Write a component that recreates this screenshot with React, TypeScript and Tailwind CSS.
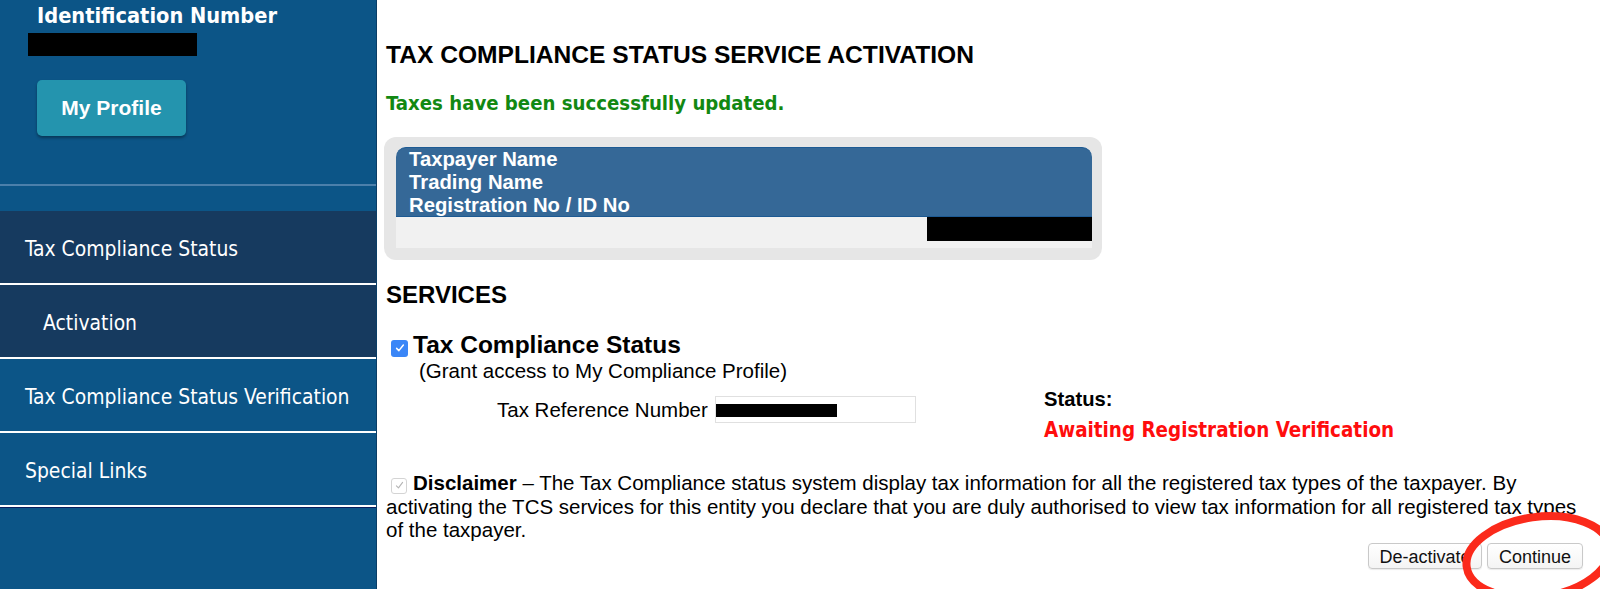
import React from 'react';

const tahoma = "font-[family-name:'DejaVu_Sans_Condensed','DejaVu_Sans',sans-serif] font-stretch-condensed";
const arial = "font-[family-name:'Liberation_Sans',Arial,sans-serif]";

const navItems = [
  { label: 'Tax Compliance Status', active: true, indent: false },
  { label: 'Activation', active: true, indent: true },
  { label: 'Tax Compliance Status Verification', active: false, indent: false },
  { label: 'Special Links', active: false, indent: false },
];

function Sidebar() {
  return (
    <aside className={`w-[377px] shrink-0 bg-[#0c5587] border-r border-[#0a3d66] flex flex-col text-white ${tahoma}`}>
      <div className="pl-[37px] pt-[4px] font-bold text-[21.6px] leading-[24px]">Identification Number</div>
      <div className="ml-[28px] mt-[5px] w-[169px] h-[23px] bg-black" />
      <div className="pl-[37px] mt-[24px]">
        <button className={`w-[149px] h-[56px] rounded-[5px] bg-[#2494ae] text-white font-bold text-[21px] shadow-[0_2px_3px_rgba(0,0,0,0.35)] ${arial}`}>
          My Profile
        </button>
      </div>
      <div className="mt-[48px] h-[2px] bg-[#4c80ab]" />
      <nav className="mt-[25px]">
        {navItems.map((item) => (
          <div
            key={item.label}
            className={`h-[74px] pt-[6px] flex items-center border-b-2 border-white shadow-[0_1px_0_#0a1e5e] text-[20.9px] ${
              item.active ? 'bg-[#163a5f]' : 'bg-[#0c5587]'
            } ${item.indent ? 'pl-[43px]' : 'pl-[25px]'}`}
          >
            {item.label}
          </div>
        ))}
      </nav>
    </aside>
  );
}

function CheckBox({ disabled }: { disabled?: boolean }) {
  if (disabled) {
    return (
      <span className="inline-flex w-4 h-4 items-center justify-center rounded-[3px] border border-[#d4d4d4] bg-white align-[-1px]">
        <svg viewBox="0 0 16 16" className="w-[11px] h-[11px]">
          <path d="M3.5 8.5 L6.5 11.5 L12.5 3.5" fill="none" stroke="#b5b5b5" strokeWidth="1.6" strokeLinecap="round" strokeLinejoin="round" />
        </svg>
      </span>
    );
  }
  return (
    <span className="inline-flex w-[17px] h-[17px] items-center justify-center rounded-[3px] bg-[#3a86f7] shrink-0">
      <svg viewBox="0 0 16 16" className="w-[12px] h-[12px]">
        <path d="M3.5 8.5 L6.5 11.5 L12.5 4" fill="none" stroke="white" strokeWidth="2" strokeLinecap="round" strokeLinejoin="round" />
      </svg>
    </span>
  );
}

export default function App() {
  return (
    <div className="relative flex h-[589px] w-[1600px] overflow-hidden bg-white">
      <Sidebar />

      <main className={`flex-1 pl-[9px] pr-[17px] text-black ${arial}`}>
        <h1 className="pt-[41px] text-[24.6px] leading-[28px] font-bold">TAX COMPLIANCE STATUS SERVICE ACTIVATION</h1>

        <p className={`mt-[23px] text-[20.2px] leading-[23px] font-bold text-[#128812] ${tahoma}`}>
          Taxes have been successfully updated.
        </p>

        {/* taxpayer card */}
        <div className="mt-[22px] -ml-[2px] w-[718px] rounded-[12px] bg-[#e6e6e6] pt-[10px] pb-[12px] pl-[12px] pr-[10px]">
          <div className="h-[70px] rounded-t-[10px] bg-[#356897] border-t border-b border-[#1d5a93] pl-[13px] text-white font-bold text-[20.3px] leading-[23px]">
            <div>Taxpayer Name</div>
            <div>Trading Name</div>
            <div>Registration No / ID No</div>
          </div>
          <div className="h-[31px] bg-[#f1f1f1] flex justify-end items-start">
            <div className="w-[165px] h-[24px] bg-black" />
          </div>
        </div>

        <h2 className="mt-[21px] text-[24px] leading-[28px] font-bold">SERVICES</h2>

        <div className="mt-[22px] ml-[5px] flex items-start">
          <span className="mt-[6px]">
            <CheckBox />
          </span>
          <span className="ml-[5px] text-[24.5px] leading-[28px] font-bold">Tax Compliance Status</span>
        </div>
        <div className="-mt-[2px] pl-[33px] text-[20.5px] leading-[23px]">(Grant access to My Compliance Profile)</div>

        <div className="flex items-start">
          <div className="w-[658px] pl-[111px] pt-[14px]">
            <div className="flex items-center h-[27px]">
              <span className="text-[20.5px] leading-[23px]">Tax Reference Number</span>
              <div className="ml-[7px] w-[201px] h-[27px] border border-[#e0e0e0] bg-white">
                <div className="mt-[7px] w-[121px] h-[13px] bg-black" />
              </div>
            </div>
          </div>
          <div className="pt-[6px]">
            <div className="text-[20.2px] leading-[23px] font-bold">Status:</div>
            <div className={`mt-[8px] text-[20.4px] leading-[23px] font-bold text-[#ff0d0d] ${tahoma}`}>
              Awaiting Registration Verification
            </div>
          </div>
        </div>

        <p className="mt-[29px] text-[20.5px] leading-[23.5px] whitespace-nowrap">
          <span className="ml-[5px] mr-[6px]">
            <CheckBox disabled />
          </span>
          <b>Disclaimer</b> – The Tax Compliance status system display tax information for all the registered tax types of the taxpayer. By
          <br />
          activating the TCS services for this entity you declare that you are duly authorised to view tax information for all registered tax types
          <br />
          of the taxpayer.
        </p>

        <div className="mt-[1px] flex justify-end gap-[5px]">
          <button className="w-[114px] h-[26px] rounded-[4px] border border-[#c9c9c9] bg-gradient-to-b from-white to-[#f4f4f4] text-[18px] text-[#111] shadow-[0_1px_1px_rgba(0,0,0,0.08)]">
            De-activate
          </button>
          <button className="w-[96px] h-[26px] rounded-[4px] border border-[#c9c9c9] bg-gradient-to-b from-white to-[#f4f4f4] text-[18px] text-[#111] shadow-[0_1px_1px_rgba(0,0,0,0.08)]">
            Continue
          </button>
        </div>
      </main>

      {/* red annotation circle */}
      <svg className="absolute inset-0 w-full h-full pointer-events-none" viewBox="0 0 1600 589">
        <ellipse cx="1538" cy="557" rx="72" ry="40" fill="none" stroke="#fb2a1b" strokeWidth="8" transform="rotate(-8 1538 557)" />
      </svg>
    </div>
  );
}
